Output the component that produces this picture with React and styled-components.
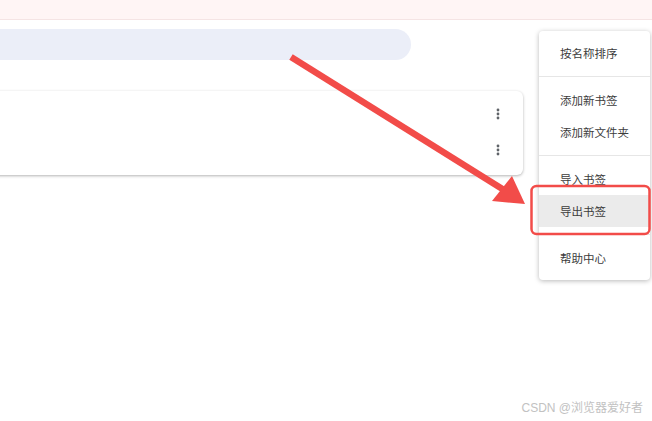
import styled, { createGlobalStyle } from "styled-components";

const GlobalStyle = createGlobalStyle`
  html, body {
    margin: 0;
    padding: 0;
    background: #fff;
  }
  * {
    box-sizing: border-box;
  }
`;

const menuGroups = [
  ["按名称排序"],
  ["添加新书签", "添加新文件夹"],
  ["导入书签", "导出书签"],
  ["帮助中心"],
];

function Kebab() {
  return (
    <KebabButton>
      <svg width="4" height="12" viewBox="0 0 4 12">
        <circle cx="2" cy="2" r="1.4" fill="#5f6368" />
        <circle cx="2" cy="6" r="1.4" fill="#5f6368" />
        <circle cx="2" cy="10" r="1.4" fill="#5f6368" />
      </svg>
    </KebabButton>
  );
}

function App() {
  return (
    <Page>
      <GlobalStyle />
      <TopBar />
      <Content>
        <SearchPill />
        <Card>
          <CardRow>
            <Kebab />
          </CardRow>
          <CardRow>
            <Kebab />
          </CardRow>
        </Card>
      </Content>

      <Menu>
        {menuGroups.map((group, gi) => (
          <MenuGroup key={gi} first={gi === 0}>
            {group.map((label) => (
              <MenuItem key={label} active={label === "导出书签"}>
                {label}
              </MenuItem>
            ))}
          </MenuGroup>
        ))}
      </Menu>

      {/* 标注：箭头 + 红框 */}
      <Annotation width="652" height="421" viewBox="0 0 652 421">
        <line x1="291" y1="57" x2="504" y2="190" stroke="#f24c49" strokeWidth="6.5" />
        <polygon points="525,204 492,201 512,176" fill="#f24c49" />
        <rect x="531.5" y="186" width="118" height="48" rx="5" fill="none" stroke="#f24c49" strokeWidth="2.5" />
      </Annotation>

      <Watermark>CSDN @浏览器爱好者</Watermark>
    </Page>
  );
}

export default App;

const Page = styled.div`
  position: relative;
  width: 652px;
  height: 421px;
  overflow: hidden;
  background: #fff;
  font-family: "Noto Sans CJK SC", "Noto Sans", sans-serif;
`;

const TopBar = styled.div`
  height: 20px;
  background: #fff5f5;
  border-bottom: 1px solid #f5e4e4;
`;

const Content = styled.div`
  display: flex;
  flex-direction: column;
  padding-top: 9px;
`;

const SearchPill = styled.div`
  margin-left: -20px;
  width: 431px;
  height: 31px;
  border-radius: 16px;
  background: #ebeef8;
`;

const Card = styled.div`
  margin-top: 31px;
  margin-left: -10px;
  width: 533px;
  height: 84px;
  padding: 5px 0 7px;
  border-radius: 6px;
  background: #fff;
  box-shadow: 0 1px 3px rgba(0, 0, 0, 0.3);
`;

const CardRow = styled.div`
  height: 36px;
  display: flex;
  align-items: center;
  justify-content: flex-end;
  padding-right: 13px;
`;

const KebabButton = styled.div`
  width: 24px;
  height: 24px;
  display: flex;
  align-items: center;
  justify-content: center;
`;

const Menu = styled.div`
  position: absolute;
  left: 539px;
  top: 31px;
  width: 111px;
  padding: 6px 0;
  background: #fff;
  border-radius: 4px;
  box-shadow: 0 1px 5px rgba(0, 0, 0, 0.28);
`;

const MenuGroup = styled.div`
  border-top: ${(p) => (p.first ? "none" : "1px solid #e6e6e6")};
  margin-top: ${(p) => (p.first ? "0" : "7px")};
  padding-top: ${(p) => (p.first ? "0" : "7px")};
`;

const MenuItem = styled.div`
  height: 32px;
  display: flex;
  align-items: center;
  padding-left: 21px;
  font-size: 11.5px;
  color: #3c3c3c;
  white-space: nowrap;
  background: ${(p) => (p.active ? "#ebebeb" : "transparent")};
`;

const Annotation = styled.svg`
  position: absolute;
  left: 0;
  top: 0;
  pointer-events: none;
`;

const Watermark = styled.div`
  position: absolute;
  right: 9px;
  top: 398px;
  font-family: "Liberation Sans", "Noto Sans CJK SC", sans-serif;
  font-size: 12px;
  color: #c2c2c2;
  white-space: nowrap;
`;
